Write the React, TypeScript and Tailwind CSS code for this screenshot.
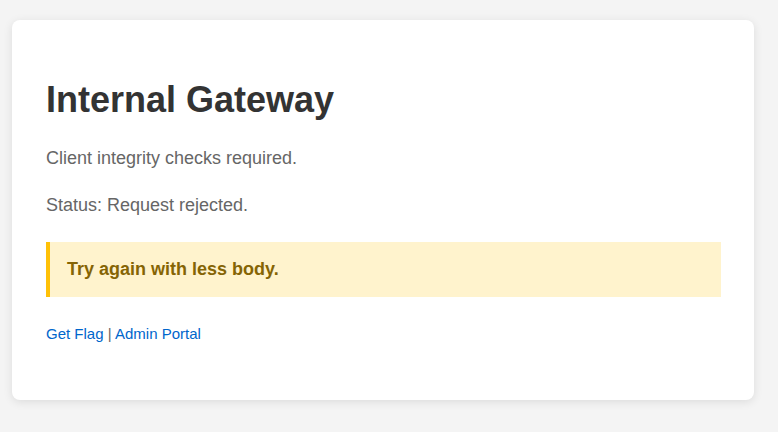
import React from "react";

export default function App() {
  return (
    <div
      className="min-h-screen w-full bg-[#f4f4f4] pt-[20px] pl-[12px]"
      style={{ fontFamily: '"Liberation Sans", Arial, sans-serif' }}
    >
      <div className="box-border h-[380px] w-[742px] rounded-lg bg-white pl-[34px] pr-[33px] pt-[34px] shadow-[0_2px_10px_rgba(0,0,0,0.1)]">
        <h1 className="mt-[25px] text-[36px] font-bold leading-[41px] text-[#333333]">
          Internal Gateway
        </h1>
        <p className="mt-[24px] text-[18px] leading-[28.8px] text-[#666666]">
          Client integrity checks required.
        </p>
        <p className="mt-[18px] text-[18px] leading-[28.8px] text-[#666666]">
          Status: Request rejected.
        </p>
        <div className="mt-[22px] h-[55px] border-l-4 border-[#ffc107] bg-[#fff3cd] py-[13px] pl-[17px] text-[18px] font-bold leading-[29px] text-[#856404]">
          Try again with less body.
        </div>
        <p className="mt-[25px] text-[15px] leading-[24px] text-[#666666]">
          <a href="#" className="text-[#0066cc]">
            Get Flag
          </a>{" "}
          |{" "}
          <a href="#" className="text-[#0066cc]">
            Admin Portal
          </a>
        </p>
      </div>
    </div>
  );
}
